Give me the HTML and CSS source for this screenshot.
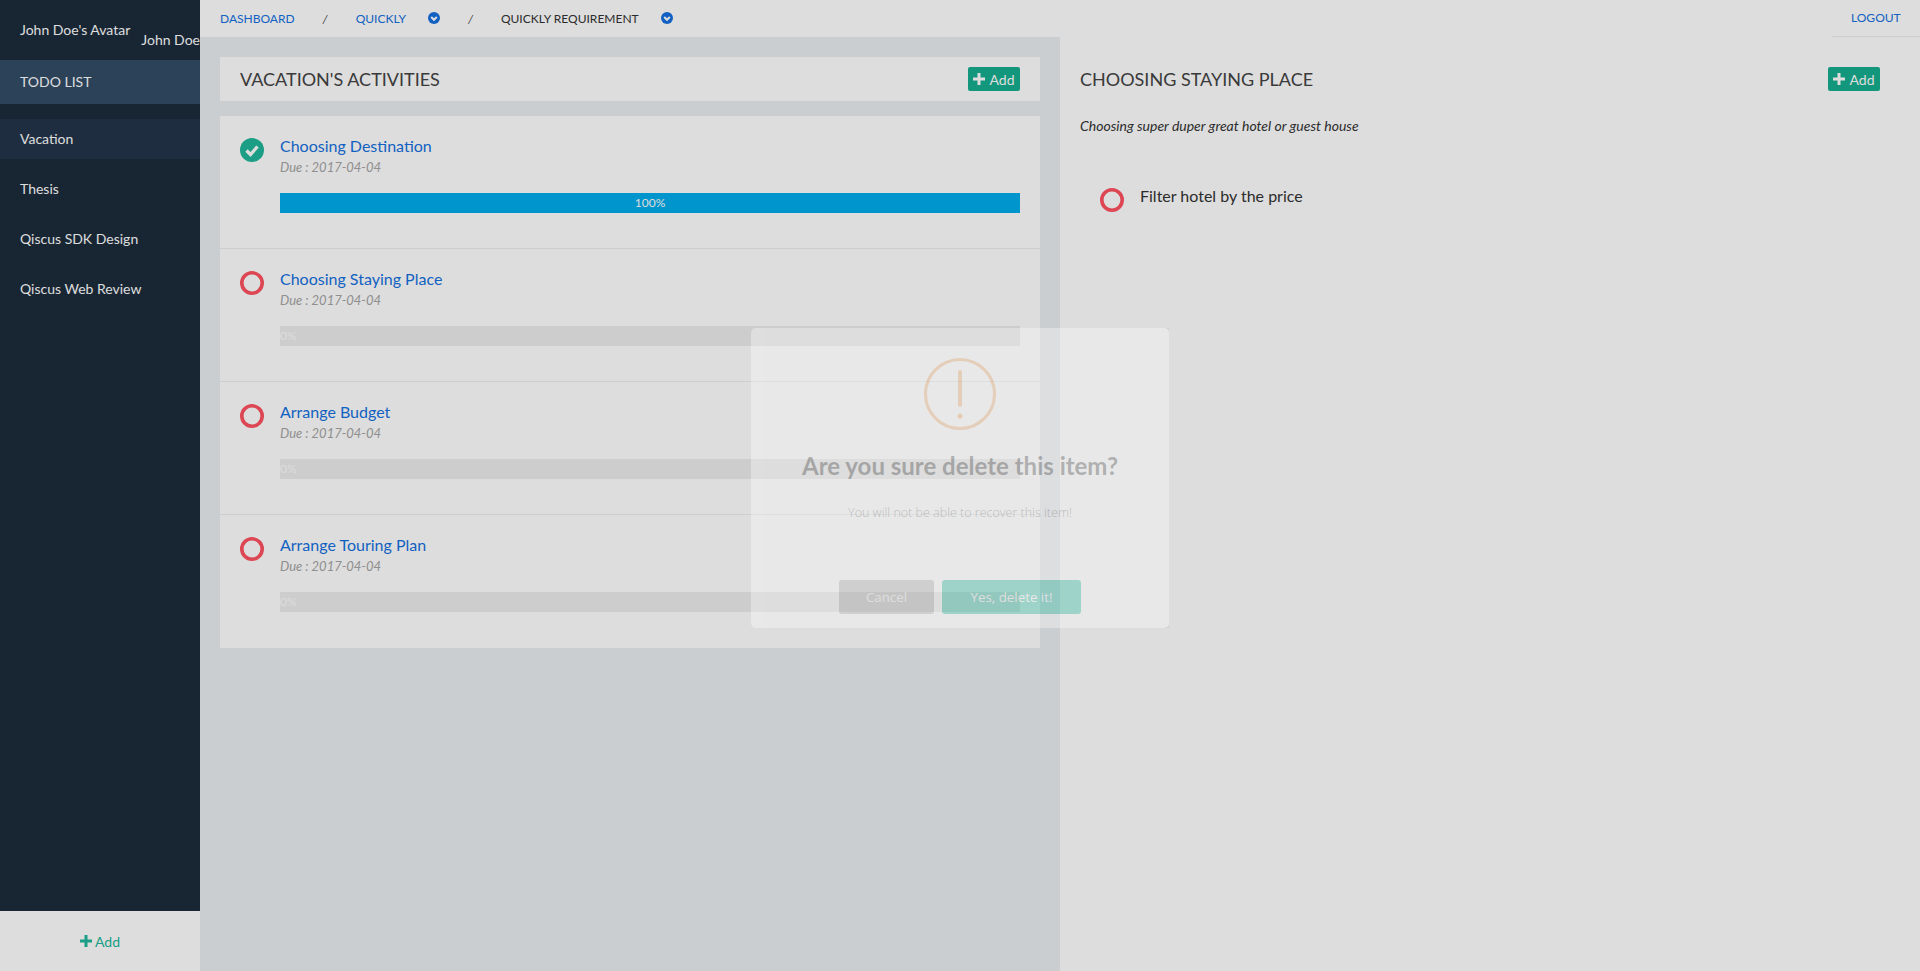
FILE: index.html
```html
<!DOCTYPE html>
<html lang="en">
<head>
<meta charset="UTF-8">
<title>Todo List</title>
<link rel="stylesheet" href="styles.css">
</head>
<body>

<aside class="sidebar">
  <div class="profile">
    <span class="avatar">John Doe's Avatar</span>
    <span class="profile-name">John Doe</span>
  </div>
  <div class="sidebar-title">TODO LIST</div>
  <ul class="project-list">
    <li class="project active">Vacation</li>
    <li class="project">Thesis</li>
    <li class="project">Qiscus SDK Design</li>
    <li class="project">Qiscus Web Review</li>
  </ul>
  <div class="sidebar-add">
    <svg class="plus" viewBox="0 0 12 12"><path d="M4.5 0h3v4.5H12v3H7.5V12h-3V7.5H0v-3h4.5z"/></svg>
    <span>Add</span>
  </div>
</aside>

<div class="main">
  <nav class="topbar">
    <div class="crumbs">
      <a class="crumb link">DASHBOARD</a>
      <span class="sep">/</span>
      <a class="crumb link">QUICKLY</a>
      <svg class="chevron" viewBox="0 0 12 12"><circle cx="6" cy="6" r="6"/><path d="M3.2 5l2.8 2.8L8.8 5"/></svg>
      <span class="sep sep-after-icon">/</span>
      <a class="crumb current">QUICKLY REQUIREMENT</a>
      <svg class="chevron" viewBox="0 0 12 12"><circle cx="6" cy="6" r="6"/><path d="M3.2 5l2.8 2.8L8.8 5"/></svg>
    </div>
    <a class="crumb link logout">LOGOUT</a>
  </nav>

  <div class="columns">
    <section class="col-left">
      <div class="panel-head">
        <h2>VACATION'S ACTIVITIES</h2>
        <button class="btn-add"><svg class="plus" viewBox="0 0 12 12"><path d="M4.5 0h3v4.5H12v3H7.5V12h-3V7.5H0v-3h4.5z"/></svg>Add</button>
      </div>
      <div class="task-card">
        <div class="task">
          <svg class="status" viewBox="0 0 24 24"><circle cx="12" cy="12" r="12" fill="#20b79a"/><path d="M6.5 12.5l4 4 7-8" fill="none" stroke="#fff" stroke-width="3.4"/></svg>
          <div class="task-body">
            <a class="task-name">Choosing Destination</a>
            <div class="due">Due : 2017-04-04</div>
            <div class="bar full">100%</div>
          </div>
        </div>
        <div class="task">
          <svg class="status" viewBox="0 0 24 24"><circle cx="12" cy="12" r="10.2" fill="none" stroke="#ff5160" stroke-width="3.6"/></svg>
          <div class="task-body">
            <a class="task-name">Choosing Staying Place</a>
            <div class="due">Due : 2017-04-04</div>
            <div class="bar">0%</div>
          </div>
        </div>
        <div class="task">
          <svg class="status" viewBox="0 0 24 24"><circle cx="12" cy="12" r="10.2" fill="none" stroke="#ff5160" stroke-width="3.6"/></svg>
          <div class="task-body">
            <a class="task-name">Arrange Budget</a>
            <div class="due">Due : 2017-04-04</div>
            <div class="bar">0%</div>
          </div>
        </div>
        <div class="task">
          <svg class="status" viewBox="0 0 24 24"><circle cx="12" cy="12" r="10.2" fill="none" stroke="#ff5160" stroke-width="3.6"/></svg>
          <div class="task-body">
            <a class="task-name">Arrange Touring Plan</a>
            <div class="due">Due : 2017-04-04</div>
            <div class="bar">0%</div>
          </div>
        </div>
      </div>
    </section>

    <section class="col-right">
      <div class="detail-head">
        <h2>CHOOSING STAYING PLACE</h2>
        <button class="btn-add"><svg class="plus" viewBox="0 0 12 12"><path d="M4.5 0h3v4.5H12v3H7.5V12h-3V7.5H0v-3h4.5z"/></svg>Add</button>
      </div>
      <p class="detail-desc">Choosing super duper great hotel or guest house</p>
      <div class="subtask">
        <svg class="status" viewBox="0 0 24 24"><circle cx="12" cy="12" r="10.2" fill="none" stroke="#ff5160" stroke-width="3.6"/></svg>
        <span>Filter hotel by the price</span>
      </div>
    </section>
  </div>
</div>

<div class="overlay"></div>

<div class="modal">
  <svg class="warn" viewBox="0 0 72 72">
    <circle cx="36" cy="36" r="34.5"/>
    <path d="M36 14v33"/>
    <circle class="warn-dot" cx="36" cy="58" r="2.6"/>
  </svg>
  <h2>Are you sure delete this item?</h2>
  <p>You will not be able to recover this item!</p>
  <div class="modal-buttons">
    <button class="btn-cancel">Cancel</button>
    <button class="btn-confirm">Yes, delete it!</button>
  </div>
</div>

</body>
</html>
```

FILE: styles.css
```css
* {
  box-sizing: border-box;
}

html, body {
  height: 100%;
}

body {
  margin: 0;
  display: flex;
  overflow: hidden;
  font-family: Lato, "Liberation Sans", sans-serif;
  background-color: #ebeef1;
  color: #444;
}

h2, p, ul {
  margin: 0;
  padding: 0;
}

/* sidebar */
.sidebar {
  width: 200px;
  flex-shrink: 0;
  display: flex;
  flex-direction: column;
  background-color: #1c2c3d;
  color: #fff;
  font-size: 14px;
  overflow: hidden;
}

.profile {
  height: 60px;
  display: flex;
  padding-left: 20px;
  white-space: nowrap;
}

.avatar {
  margin-top: 21px;
  line-height: 18px;
}

.profile-name {
  margin-top: 31px;
  margin-left: 11px;
  line-height: 18px;
}

.sidebar-title {
  height: 44px;
  line-height: 44px;
  padding-left: 20px;
  background-color: #334d67;
}

.project-list {
  list-style: none;
  margin-top: 15px;
  flex: 1;
}

.project {
  height: 40px;
  line-height: 40px;
  margin-bottom: 10px;
  padding-left: 20px;
}

.project.active {
  background-color: #233549;
}

.sidebar-add {
  height: 60px;
  display: flex;
  align-items: center;
  justify-content: center;
  gap: 3px;
  background-color: #fff;
  color: #20b79a;
}

.plus {
  width: 12px;
  height: 12px;
  fill: currentColor;
}

/* top navigation */
.main {
  flex: 1;
  display: flex;
  flex-direction: column;
  min-width: 0;
}

.topbar {
  height: 37px;
  flex-shrink: 0;
  display: flex;
  justify-content: space-between;
  background-color: #fff;
  font-size: 12px;
}

.crumbs {
  display: flex;
  align-items: center;
  height: 36px;
  padding-left: 20px;
}

.crumb {
  white-space: nowrap;
}

.link {
  color: #1571e0;
}

.current {
  color: #333;
}

.sep {
  margin: 0 28px;
  font-style: italic;
}

.sep-after-icon {
  margin: 0 28px 0 28px;
}

.chevron {
  width: 12px;
  height: 12px;
  margin-left: 22px;
  fill: #1571e0;
}

.chevron path {
  fill: none;
  stroke: #fff;
  stroke-width: 2;
}

.logout {
  width: 88px;
  height: 37px;
  line-height: 36px;
  padding-left: 19px;
  border-bottom: 1px solid #ebeef1;
}

/* columns */
.columns {
  flex: 1;
  display: flex;
  min-height: 0;
}

.col-left {
  width: 860px;
  padding: 20px;
}

.col-right {
  flex: 1;
  padding: 20px 40px 0 20px;
  background-color: #fff;
}

.panel-head,
.detail-head {
  height: 44px;
  display: flex;
  align-items: center;
  justify-content: space-between;
}

.panel-head {
  padding: 0 20px;
  background-color: #fff;
}

.panel-head h2,
.detail-head h2 {
  font-size: 18px;
  font-weight: 400;
}

.btn-add {
  width: 52px;
  height: 24px;
  padding: 0;
  display: flex;
  align-items: center;
  justify-content: center;
  gap: 4px;
  border: none;
  border-radius: 2px;
  background-color: #16af90;
  color: #fff;
  font-family: inherit;
  font-size: 14px;
}

/* tasks */
.task-card {
  margin-top: 15px;
  background-color: #fff;
}

.task {
  height: 133px;
  display: flex;
  padding: 22px 20px 0;
  border-bottom: 1px solid #ebeef1;
}

.task:last-child {
  border-bottom: none;
}

.status {
  width: 24px;
  height: 24px;
  flex-shrink: 0;
}

.task-body {
  flex: 1;
  margin-left: 16px;
}

.task-name {
  display: block;
  font-size: 16px;
  line-height: 20px;
  margin-top: -2px;
  color: #1571e0;
}

.due {
  margin-top: 2px;
  font-size: 13px;
  font-style: italic;
  line-height: 18px;
  color: #a5a5a5;
}

.bar {
  height: 20px;
  margin-top: 17px;
  background-color: #ededed;
  color: #fff;
  font-size: 12px;
  line-height: 20px;
}

.bar.full {
  background-color: #01acec;
  text-align: center;
}

/* detail */
.detail-desc {
  margin-top: 15px;
  font-size: 14px;
  font-style: italic;
  line-height: 20px;
  color: #333;
}

.subtask {
  display: flex;
  margin-top: 52px;
  margin-left: 20px;
  font-size: 16px;
  color: #333;
}

.subtask span {
  margin-left: 16px;
  margin-top: -2px;
  line-height: 20px;
}

/* dialog */
.overlay {
  position: fixed;
  inset: 0;
  background-color: rgba(0, 0, 0, 0.133);
}

.modal {
  position: fixed;
  left: 751px;
  top: 328px;
  width: 418px;
  height: 300px;
  padding-top: 30px;
  background-color: #fff;
  border-radius: 5px;
  opacity: 0.33;
  text-align: center;
}

.warn {
  display: block;
  width: 72px;
  height: 72px;
  margin: 0 auto;
  fill: none;
  stroke: #f3ac70;
  stroke-width: 3;
}

.warn path {
  stroke-width: 4;
  stroke-linecap: round;
}

.warn .warn-dot {
  fill: #f3ac70;
  stroke: none;
}

.modal h2 {
  margin-top: 16px;
  font-size: 24px;
  font-weight: 700;
  line-height: 40px;
  color: #575757;
}

.modal p {
  margin-top: 17px;
  font-family: "Open Sans", sans-serif;
  font-size: 12.5px;
  font-weight: 300;
  line-height: 20px;
  color: #797979;
}

.modal-buttons {
  display: flex;
  justify-content: center;
  gap: 8px;
  margin-top: 57px;
}

.modal-buttons button {
  height: 34px;
  border: none;
  border-radius: 3px;
  color: #fff;
  font-family: "Open Sans", sans-serif;
  font-size: 13.33px;
}

.btn-cancel {
  width: 95px;
  background-color: #b4b4b4;
}

.btn-confirm {
  width: 139px;
  background-color: #1fbfa0;
}
```
